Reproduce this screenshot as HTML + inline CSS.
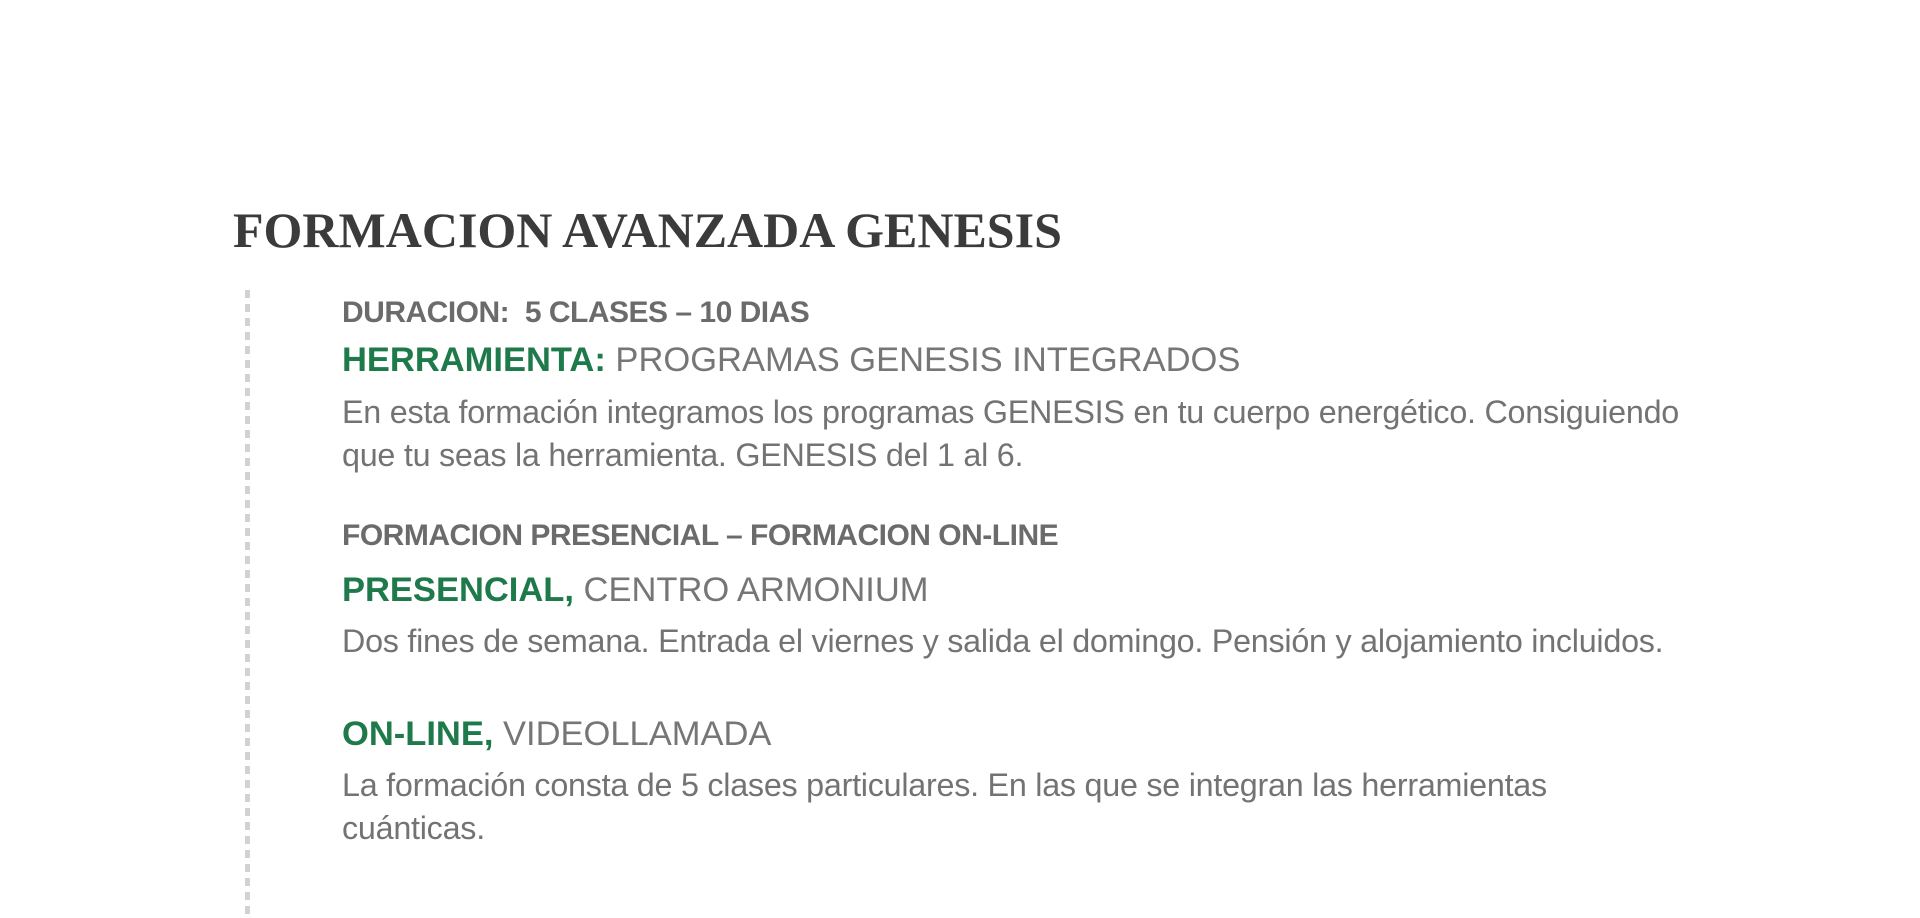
<!DOCTYPE html>
<html><head><meta charset="utf-8"><style>
html,body{margin:0;padding:0;background:#fff;width:1920px;height:918px;overflow:hidden;position:relative}
.t{position:absolute;white-space:nowrap;line-height:1;font-family:"Liberation Sans",sans-serif;color:#737373}
.title{font-family:"Liberation Serif",serif;font-weight:bold;color:#3b3b3b;font-size:50px;left:233px;top:205px}
.b{font-weight:bold;color:#6b6b6b;font-size:30px;letter-spacing:-0.5px}
.h{font-size:34.5px;color:#767676}
.h b{color:#1f7a4b}
.p{font-size:32.3px;letter-spacing:-0.25px}
.dots{position:absolute;left:245px;top:290px;width:5px;height:628px;background:repeating-linear-gradient(to bottom,#d2d2d2 0 8px,transparent 8px 14px)}
</style></head><body>
<div class="t title">FORMACION AVANZADA GENESIS</div>
<div class="dots"></div>
<div class="t b" style="left:342px;top:298px">DURACION:&nbsp; 5 CLASES – 10 DIAS</div>
<div class="t h" style="left:342px;top:343px"><b>HERRAMIENTA:</b> PROGRAMAS GENESIS INTEGRADOS</div>
<div class="t p" style="left:342px;top:396px">En esta formación integramos los programas GENESIS en tu cuerpo energético. Consiguiendo</div>
<div class="t p" style="left:342px;top:439px">que tu seas la herramienta. GENESIS del 1 al 6.</div>
<div class="t b" style="left:342px;top:521px">FORMACION PRESENCIAL – FORMACION ON-LINE</div>
<div class="t h" style="left:342px;top:573px"><b>PRESENCIAL,</b> CENTRO ARMONIUM</div>
<div class="t p" style="left:342px;top:625px">Dos fines de semana. Entrada el viernes y salida el domingo. Pensión y alojamiento incluidos.</div>
<div class="t h" style="left:342px;top:717px"><b>ON-LINE,</b> VIDEOLLAMADA</div>
<div class="t p" style="left:342px;top:769px">La formación consta de 5 clases particulares. En las que se integran las herramientas</div>
<div class="t p" style="left:342px;top:812px">cuánticas.</div>
</body></html>
